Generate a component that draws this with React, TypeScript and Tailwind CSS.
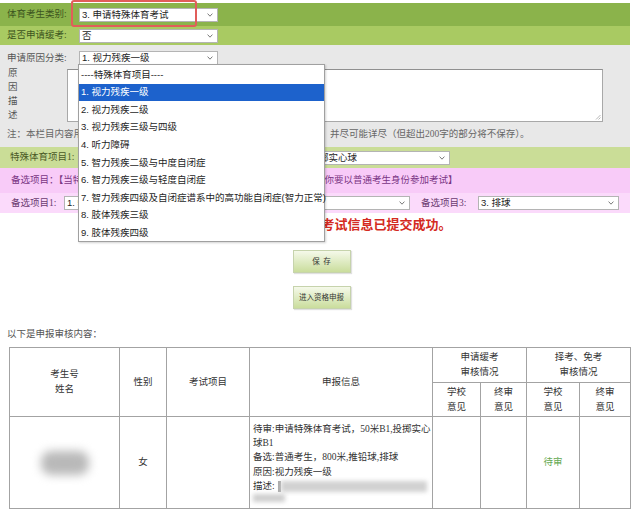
import React from "react";

const SANS = "[font-family:'Liberation_Sans','Noto_Sans_CJK_SC',sans-serif]";
const SERIF = "[font-family:'Liberation_Serif','Noto_Sans_CJK_SC',serif]";

function Chevron() {
  return (
    <svg width="6" height="4" viewBox="0 0 6 4" className="shrink-0">
      <path d="M0.6 0.6 L3 3.2 L5.4 0.6" fill="none" stroke="#6b6b6b" strokeWidth="0.9" />
    </svg>
  );
}

function Select({ className, text }: { className: string; text: string }) {
  return (
    <div
      className={`flex items-center justify-between bg-white border border-[#b4b4b4] pl-[2px] pr-[4px] h-[14px] text-[9.5px] text-[#1e1e1e] leading-none overflow-hidden ${SANS} ${className}`}
    >
      <span className="whitespace-nowrap overflow-hidden">{text}</span>
      <Chevron />
    </div>
  );
}

const options = [
  "----特殊体育项目----",
  "1. 视力残疾一级",
  "2. 视力残疾二级",
  "3. 视力残疾三级与四级",
  "4. 听力障碍",
  "5. 智力残疾二级与中度自闭症",
  "6. 智力残疾三级与轻度自闭症",
  "7. 智力残疾四级及自闭症谱系中的高功能自闭症(智力正常)",
  "8. 肢体残疾三级",
  "9. 肢体残疾四级",
];

function Btn({ children }: { children: React.ReactNode }) {
  return (
    <div className="mx-auto w-[58px] h-[23px] flex items-center justify-center border border-[#c6d3ac] bg-linear-to-b from-[#f5f9ea] to-[#cadd9c] shadow-[1px_1px_1px_rgba(0,0,0,0.12)] text-[7.5px] text-[#333]">
      {children}
    </div>
  );
}

export default function App() {
  return (
    <div className={`relative w-[643px] h-[510px] overflow-hidden bg-white text-[9.5px] ${SERIF}`}>
      {/* form area */}
      <div className="w-[630px] pt-[3px]">
        <div className="flex items-center h-[23px] bg-[#8bb34b] pl-[7px]">
          <span className="w-[72px] text-[#3c5520]">体育考生类别:</span>
          <Select className="w-[139px]" text="3. 申请特殊体育考试" />
        </div>
        <div className="flex items-center h-[19px] bg-[#a9ca62] pl-[7px]">
          <span className="w-[72px] text-[#3c5520]">是否申请缓考:</span>
          <Select className="w-[139px]" text="否" />
        </div>
        <div className="bg-[#e8e8e8]">
          <div className="flex items-start h-[21px] pl-[7px] pt-[6px]">
            <span className="w-[72px] text-[#555] leading-[14px]">申请原因分类:</span>
            <Select className="w-[139px]" text="1. 视力残疾一级" />
          </div>
          <div className="flex h-[56px] pl-[8px]">
            <div className="w-[59px] flex flex-col leading-[14px] text-[#555]">
              <span>原</span>
              <span>因</span>
              <span>描</span>
              <span>述</span>
            </div>
            <div className="relative mt-[3px] w-[536px] h-[53px] bg-white border border-[#a8a8a8] border-t-[#8f8f8f]">
              <svg width="6" height="6" viewBox="0 0 6 6" className="absolute right-[1px] bottom-[1px]">
                <path d="M5.5 1 L1 5.5 M5.5 3.5 L3.5 5.5" stroke="#9a9a9a" strokeWidth="0.7" />
              </svg>
            </div>
          </div>
          <div className="flex items-center h-[25px] pl-[7px] text-[#666] whitespace-nowrap">
            注：本栏目内容用于描述申请特殊体育考试或缓考的原因，请如实认真填写，并尽可能详尽（但超出200字的部分将不保存）。
          </div>
        </div>
        <div className="flex items-center h-[21px] bg-[#cadd97] pl-[10px]">
          <span className="w-[69px] text-[#4a5a26]">特殊体育项目1:</span>
          <Select className="w-[371px]" text="1. 视力残疾一级：50米B1，立定跳远B1，坐位体前屈,投掷实心球" />
        </div>
        <div className="flex items-center h-[25px] bg-[#f8cbf8] pl-[11px] text-[#7a3584] whitespace-nowrap overflow-hidden">
          {"备选项目：【当特殊体育考试申请未获得学校及区县的批准或无法完成时，\u00a0\u00a0你要以普通考生身份参加考试】"}
        </div>
        <div className="flex items-center h-[20px] bg-[#fbdafb] pl-[11px] text-[#6a3a70]">
          <span className="w-[53px]">备选项目1:</span>
          <Select className="w-[126px]" text="1. 50米" />
          <span className="ml-[9px] w-[54px]">备选项目2:</span>
          <Select className="w-[157px]" text="2. 800米" />
          <span className="ml-[11px] w-[57px]">备选项目3:</span>
          <Select className="w-[141px]" text="3. 排球" />
        </div>
      </div>

      {/* success message */}
      <div className={`flex items-center justify-center h-[24px] text-[13px] font-bold text-[#d42a22] ${SANS}`}>
        你申请缓考及特殊体育考试信息已提交成功。
      </div>

      <div className="mt-[13px]">
        <Btn>保&nbsp;&nbsp;存</Btn>
      </div>
      <div className="mt-[13px]">
        <Btn>进入资格申报</Btn>
      </div>

      <div className="mt-[19px] pl-[7px] leading-[12px] text-[#555]">以下是申报审核内容：</div>

      <table className="mt-[7px] ml-[9px] w-[621px] table-fixed border-collapse text-[#333] leading-[15px]">
        <colgroup>
          <col className="w-[110px]" />
          <col className="w-[47px]" />
          <col className="w-[83px]" />
          <col className="w-[183px]" />
          <col className="w-[48px]" />
          <col className="w-[46px]" />
          <col className="w-[53px]" />
          <col className="w-[51px]" />
        </colgroup>
        <tbody>
          <tr className="h-[35px]">
            <td rowSpan={2} className="border border-[#a3a3a3] text-center align-middle">
              <div>考生号</div>
              <div>姓名</div>
            </td>
            <td rowSpan={2} className="border border-[#a3a3a3] text-center align-middle">性别</td>
            <td rowSpan={2} className="border border-[#a3a3a3] text-center align-middle">考试项目</td>
            <td rowSpan={2} className="border border-[#a3a3a3] text-center align-middle">申报信息</td>
            <td colSpan={2} className="border border-[#a3a3a3] text-center align-middle">
              <div>申请缓考</div>
              <div>审核情况</div>
            </td>
            <td colSpan={2} className="border border-[#a3a3a3] text-center align-middle">
              <div>择考、免考</div>
              <div>审核情况</div>
            </td>
          </tr>
          <tr className="h-[34px]">
            <td className="border border-[#a3a3a3] text-center align-middle">
              <div>学校</div>
              <div>意见</div>
            </td>
            <td className="border border-[#a3a3a3] text-center align-middle">
              <div>终审</div>
              <div>意见</div>
            </td>
            <td className="border border-[#a3a3a3] text-center align-middle">
              <div>学校</div>
              <div>意见</div>
            </td>
            <td className="border border-[#a3a3a3] text-center align-middle">
              <div>终审</div>
              <div>意见</div>
            </td>
          </tr>
          <tr className="h-[92px]">
            <td className="border border-[#a3a3a3] align-middle">
              <div className="mx-auto w-[48px] h-[24px] rounded-[10px] bg-[#b9b9b9] blur-[5px]" />
            </td>
            <td className="border border-[#a3a3a3] text-center align-middle">女</td>
            <td className="border border-[#a3a3a3]" />
            <td className="border border-[#a3a3a3] align-middle pl-[3px] pr-0 leading-[14.3px] text-[#333] whitespace-nowrap overflow-hidden">
              <div>待审:申请特殊体育考试，50米B1,投掷实心</div>
              <div>球B1</div>
              <div>备选:普通考生，800米,推铅球,排球</div>
              <div>原因:视力残疾一级</div>
              <div className="flex items-center">
                <span>描述:</span>
                <span className="ml-[3px] w-[3px] h-[11px] bg-[#a8a8a8]" />
                <span className="w-[146px] h-[11px] bg-[#d2d2d2] blur-[2px]" />
              </div>
              <div className="h-[10px] flex items-center">
                <span className="w-[32px] h-[8px] bg-[#cfcfcf] blur-[2px]" />
              </div>
            </td>
            <td className="border border-[#a3a3a3]" />
            <td className="border border-[#a3a3a3]" />
            <td className="border border-[#a3a3a3] text-center align-middle text-[#66aa55]">待审</td>
            <td className="border border-[#a3a3a3]" />
          </tr>
        </tbody>
      </table>

      {/* open dropdown list */}
      <div className={`absolute left-[78px] top-[64px] w-[247px] h-[178px] bg-white border border-[#a0a0a0] shadow-[1px_1px_2px_rgba(0,0,0,0.18)] pt-[1px] text-[9.5px] text-[#1e1e1e] ${SANS}`}>
        {options.map((o, i) => (
          <div
            key={o}
            className={
              i === 1
                ? "h-[17.6px] flex items-center pl-[2px] whitespace-nowrap bg-[#1d62cc] text-white"
                : "h-[17.6px] flex items-center pl-[2px] whitespace-nowrap"
            }
          >
            {o}
          </div>
        ))}
      </div>

      {/* red annotation box */}
      <div className="absolute left-[71px] top-0 w-[126px] h-[27px] border-[2.5px] border-[#e15d5a] rounded-[3px]" />
    </div>
  );
}
